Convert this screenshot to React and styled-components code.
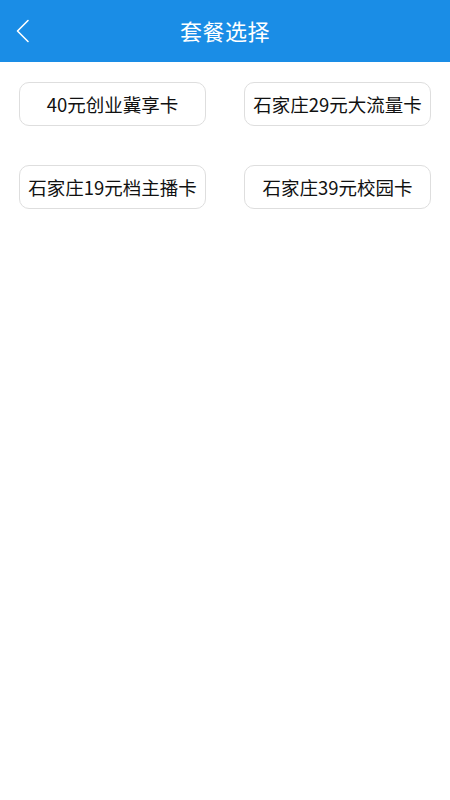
import React from "react";
import styled, { createGlobalStyle } from "styled-components";

const GlobalStyle = createGlobalStyle`
  html, body {
    margin: 0;
    padding: 0;
    background: #ffffff;
    font-family: "Noto Sans CJK SC", "Noto Sans", sans-serif;
  }
`;

const plans = [
  "40元创业冀享卡",
  "石家庄29元大流量卡",
  "石家庄19元档主播卡",
  "石家庄39元校园卡",
];

const App = () => {
  return (
    <S.Page>
      <GlobalStyle />
      <S.Header>
        <S.Back aria-label="返回">
          <svg width="16" height="24" viewBox="0 0 16 24" fill="none">
            <path d="M13 1.5 L2.5 12 L13 22.5" stroke="#ffffff" strokeWidth="1.6" strokeLinecap="round" strokeLinejoin="round" />
          </svg>
        </S.Back>
        <S.Title>套餐选择</S.Title>
      </S.Header>
      <S.Grid>
        {plans.map((p) => (
          <S.Card key={p}>{p}</S.Card>
        ))}
      </S.Grid>
    </S.Page>
  );
};

export default App;

const Page = styled.div`
  width: 450px;
  min-height: 800px;
  background: #ffffff;
`;

const Header = styled.div`
  position: relative;
  height: 62px;
  background: #1a8de6;
  display: flex;
  align-items: center;
  justify-content: center;
`;

const Back = styled.div`
  position: absolute;
  left: 15px;
  top: 19px;
  width: 16px;
  height: 24px;
  display: flex;
`;

const Title = styled.div`
  color: #ffffff;
  font-size: 22px;
  letter-spacing: 0.5px;
  margin-top: -2px;
`;

const Grid = styled.div`
  display: grid;
  grid-template-columns: 187px 187px;
  column-gap: 38px;
  row-gap: 39px;
  padding: 20px 19px 0;
`;

const Card = styled.div`
  box-sizing: border-box;
  height: 44px;
  border: 1px solid #dedede;
  border-radius: 10px;
  display: flex;
  align-items: center;
  justify-content: center;
  font-size: 18.5px;
  color: #111111;
  white-space: nowrap;
  padding-bottom: 1px;
`;

const S = {
  Page,
  Header,
  Back,
  Title,
  Grid,
  Card,
};
